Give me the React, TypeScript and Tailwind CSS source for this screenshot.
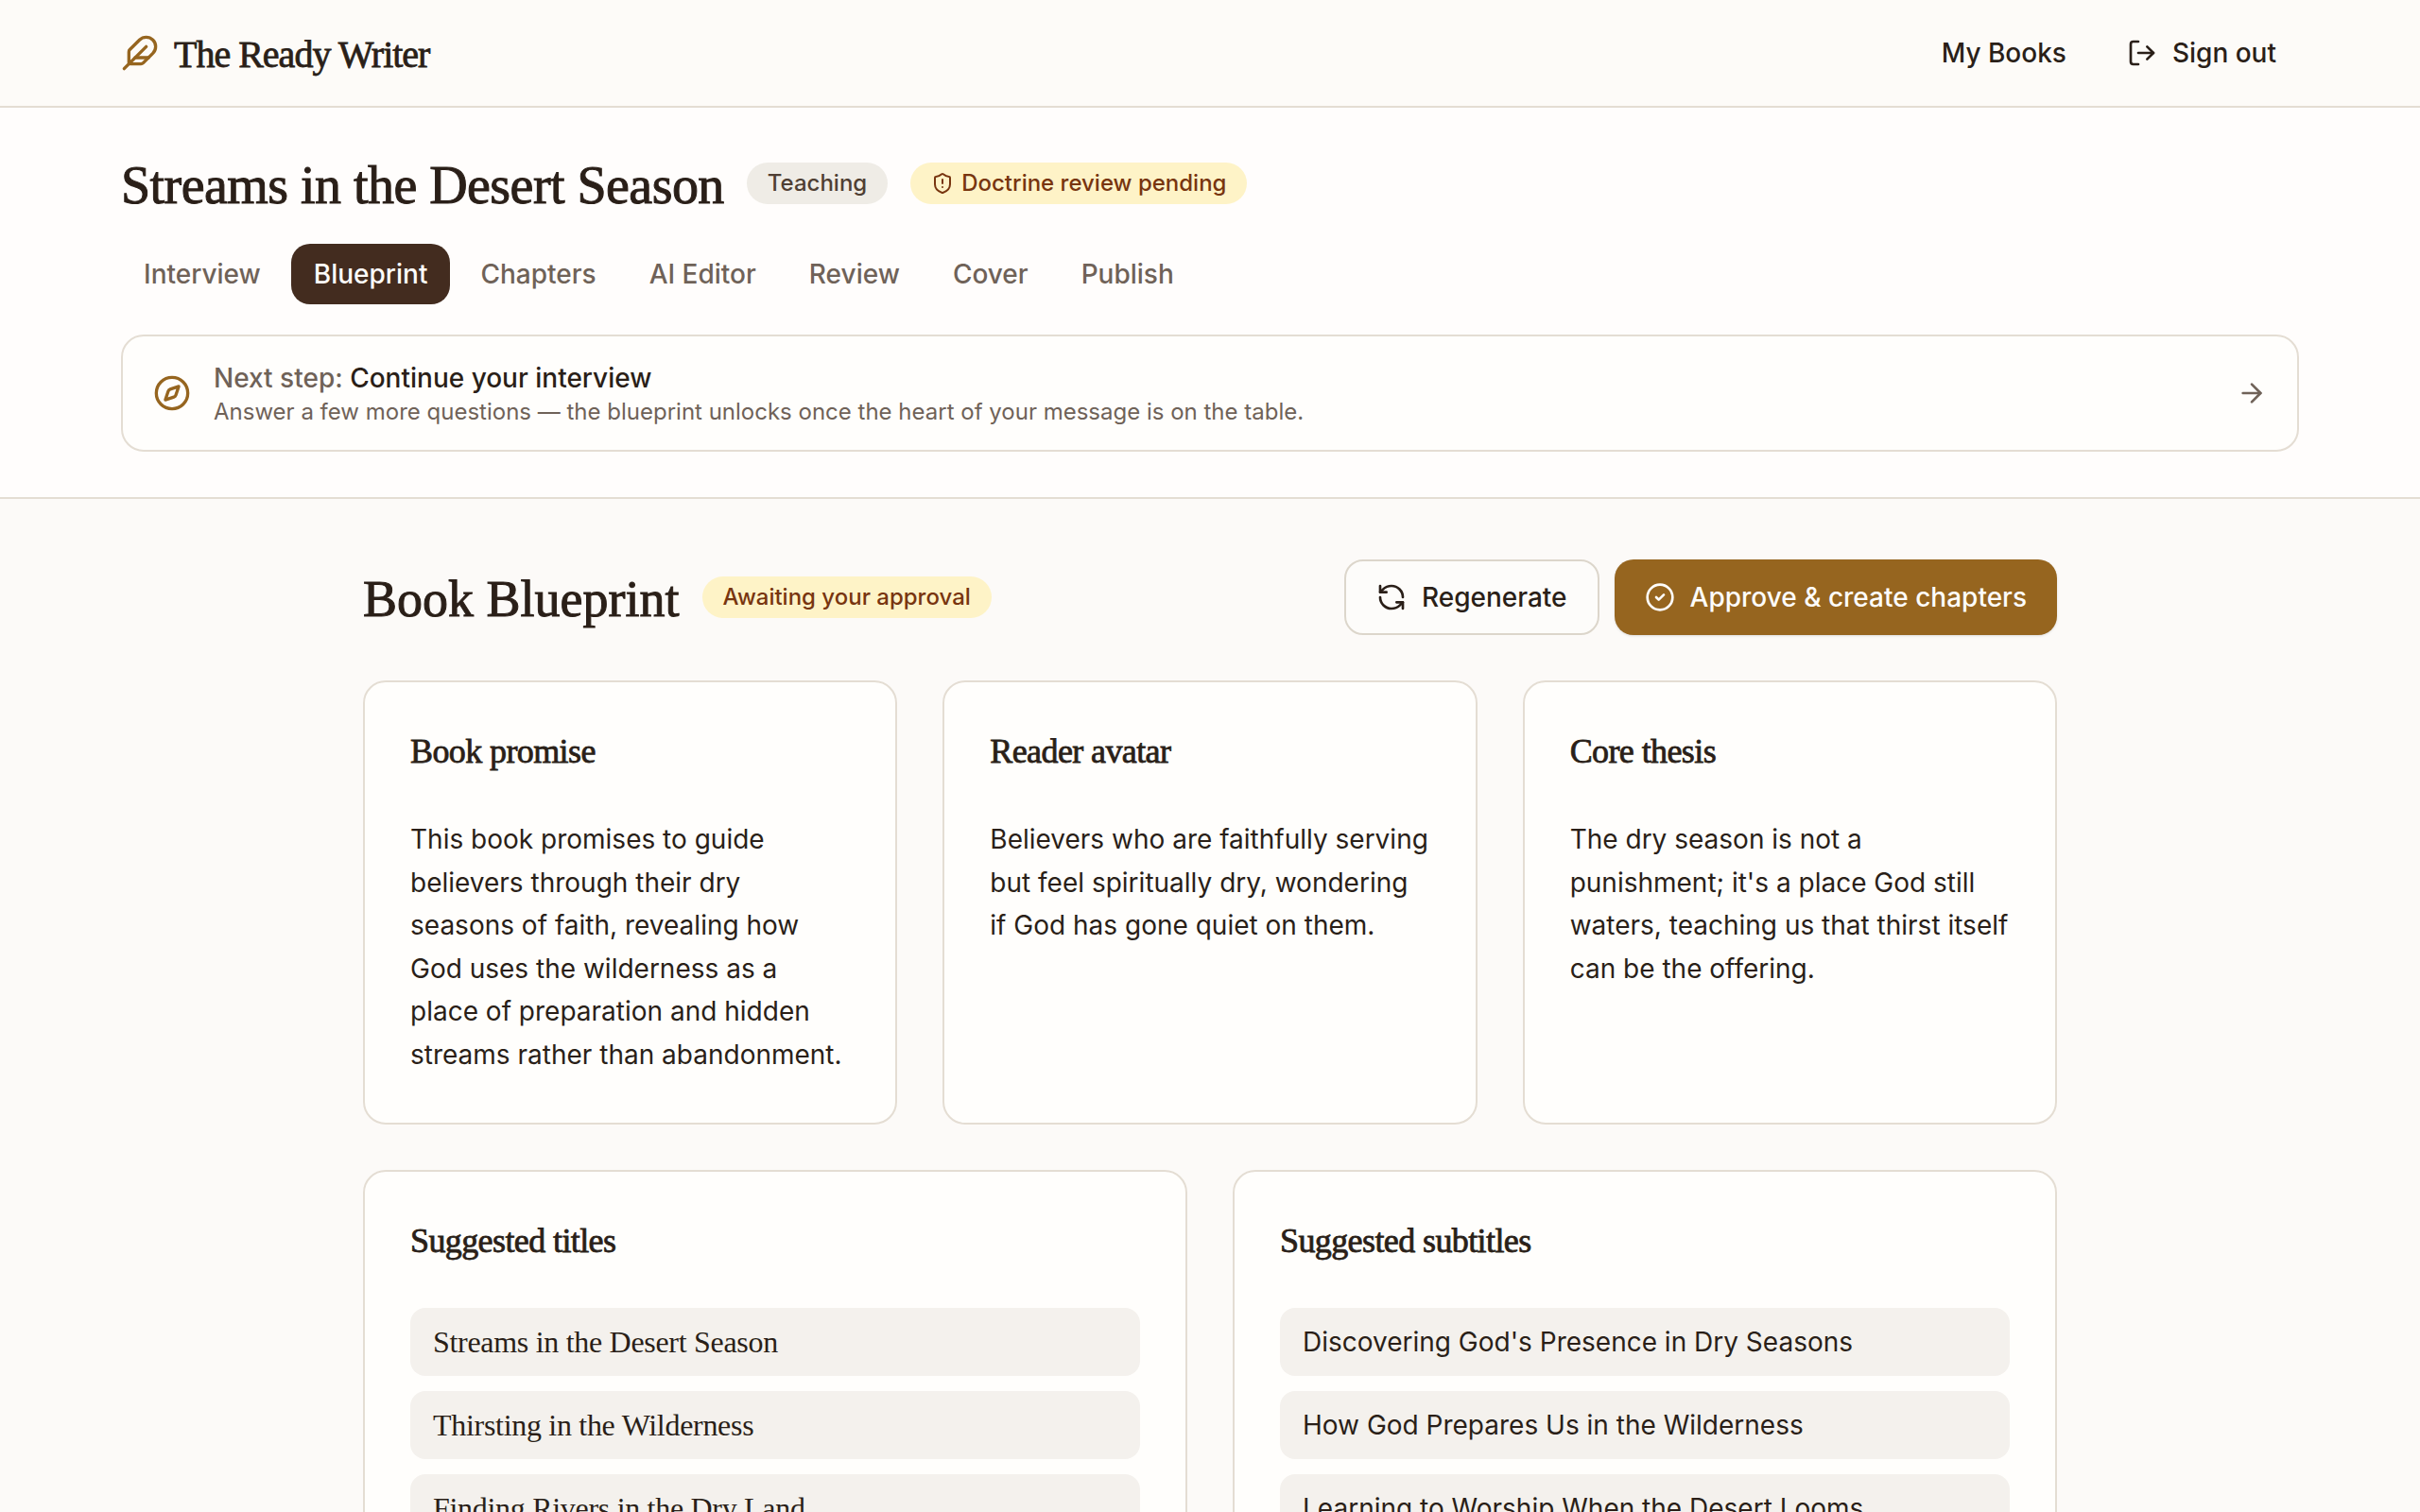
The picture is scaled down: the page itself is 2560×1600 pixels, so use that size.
import {FC, ReactNode} from 'react';
import {ArrowRight, CircleCheck, Compass, Feather, LogOut, RefreshCcw, ShieldAlert} from 'lucide-react';

const serif = "[font-family:'Liberation_Serif',serif]";

const tabs = ['Interview', 'Blueprint', 'Chapters', 'AI Editor', 'Review', 'Cover', 'Publish'];

const summaries = [
  {
    title: 'Book promise',
    text: 'This book promises to guide believers through their dry seasons of faith, revealing how God uses the wilderness as a place of preparation and hidden streams rather than abandonment.',
  },
  {
    title: 'Reader avatar',
    text: 'Believers who are faithfully serving but feel spiritually dry, wondering if God has gone quiet on them.',
  },
  {
    title: 'Core thesis',
    text: "The dry season is not a punishment; it's a place God still waters, teaching us that thirst itself can be the offering.",
  },
];

const titles = ['Streams in the Desert Season', 'Thirsting in the Wilderness', 'Finding Rivers in the Dry Land'];
const subtitles = [
  "Discovering God's Presence in Dry Seasons",
  'How God Prepares Us in the Wilderness',
  'Learning to Worship When the Desert Looms',
];

const Card: FC<{title: string; children: ReactNode}> = ({title, children}) => (
  <div className="rounded-[24px] border-2 border-[#e4ddd3] bg-[#fffefc] p-12">
    <h3 className={`${serif} text-[36px] leading-[50px] tracking-[-0.6px] text-[#2a1f18] [-webkit-text-stroke:0.8px]`}>{title}</h3>
    {children}
  </div>
);

const App: FC = () => (
  <div className="h-[1600px] overflow-hidden bg-[#fcfaf8] font-['Inter',sans-serif] text-[#2a1f18]">
    <header className="flex h-[114px] items-center justify-between border-b-2 border-[#e4ddd3] bg-[#fdfbf8] px-32">
      <div className="flex items-center gap-4">
        <Feather className="h-10 w-10 text-[#96651f]" strokeWidth={2} />
        <span className={`${serif} pt-[3px] text-[40px] tracking-[-1px] [-webkit-text-stroke:0.8px]`}>The Ready Writer</span>
      </div>
      <div className="flex items-center gap-16 text-[28px] font-medium">
        <span>My Books</span>
        <span className="flex items-center gap-4 pr-6">
          <LogOut className="h-8 w-8" />
          Sign out
        </span>
      </div>
    </header>

    <section className="border-b-2 border-[#e4ddd3] bg-[#fffdfc] px-32 pt-12 pb-12">
      <div className="flex h-16 items-center gap-6">
        <h1 className={`${serif} pt-[3px] text-[56px] leading-[64px] tracking-[-0.55px] [-webkit-text-stroke:1px]`}>Streams in the Desert Season</h1>
        <span className="rounded-full bg-[#efece6] px-[22px] py-[6px] text-[24px] leading-[32px] font-medium text-[#4f3f34]">Teaching</span>
        <span className="flex items-center gap-2 rounded-full bg-[#fef3c7] px-[22px] py-[6px] text-[24px] leading-[32px] font-medium text-[#78350f]">
          <ShieldAlert className="h-6 w-6" />
          Doctrine review pending
        </span>
      </div>
      <nav className="mt-8 flex gap-2">
        {tabs.map(tab => (
          <span
            className={
              tab === 'Blueprint'
                ? 'rounded-[20px] bg-[#432c1f] px-6 py-3 text-[28px] leading-[40px] font-medium text-[#fdfcfa]'
                : 'px-6 py-3 text-[28px] leading-[40px] font-medium text-[#6f6258]'
            }
            key={tab}>
            {tab}
          </span>
        ))}
      </nav>
      <div className="mt-8 flex items-center gap-6 rounded-[24px] border-2 border-[#e4ddd3] bg-[#fffefc] px-8 py-6">
        <Compass className="h-10 w-10 text-[#96651f]" />
        <div className="flex-1">
          <p className="text-[28px] leading-[40px] font-medium text-[#6f6258]">
            Next step: <span className="text-[#2a1f18]">Continue your interview</span>
          </p>
          <p className="text-[24px] leading-[32px] text-[#6f6258]">
            Answer a few more questions — the blueprint unlocks once the heart of your message is on the table.
          </p>
        </div>
        <ArrowRight className="h-8 w-8 text-[#6f6258]" />
      </div>
    </section>

    <main className="mx-auto w-[1792px] pt-16">
      <div className="flex items-center justify-between">
        <div className="flex items-center gap-6">
          <h2 className={`${serif} pt-[3px] text-[54px] leading-[72px] [-webkit-text-stroke:1px]`}>Book Blueprint</h2>
          <span className="rounded-full bg-[#fef3c7] px-[22px] py-[6px] text-[24px] leading-[32px] font-medium text-[#78350f]">Awaiting your approval</span>
        </div>
        <div className="flex gap-4">
          <button className="flex h-20 items-center gap-4 rounded-[20px] border-2 border-[#dcd6cb] bg-[#fdfcfa] px-8 text-[28px] font-medium">
            <RefreshCcw className="h-8 w-8" />
            Regenerate
          </button>
          <button className="flex h-20 items-center gap-4 rounded-[20px] bg-[#96651f] px-8 text-[28px] font-medium text-[#fdfcfa] shadow-sm">
            <CircleCheck className="h-8 w-8" />
            Approve &amp; create chapters
          </button>
        </div>
      </div>

      <div className="mt-12 grid grid-cols-3 gap-12">
        {summaries.map(({title, text}) => (
          <Card key={title} title={title}>
            <p className="mt-[46px] mb-px text-[28px] leading-[45.5px]">{text}</p>
          </Card>
        ))}
      </div>

      <div className="mt-12 grid grid-cols-2 gap-12">
        <Card title="Suggested titles">
          <ul className="mt-[46px] flex flex-col gap-4">
            {titles.map(title => (
              <li className={`${serif} rounded-[16px] bg-[#f4f1ed] px-6 py-4 text-[32px] leading-[40px] tracking-[-0.3px]`} key={title}>
                {title}
              </li>
            ))}
          </ul>
        </Card>
        <Card title="Suggested subtitles">
          <ul className="mt-[46px] flex flex-col gap-4">
            {subtitles.map(title => (
              <li className="rounded-[16px] bg-[#f4f1ed] px-6 py-4 text-[28px] leading-[40px]" key={title}>
                {title}
              </li>
            ))}
          </ul>
        </Card>
      </div>
    </main>
  </div>
);

export default App;
